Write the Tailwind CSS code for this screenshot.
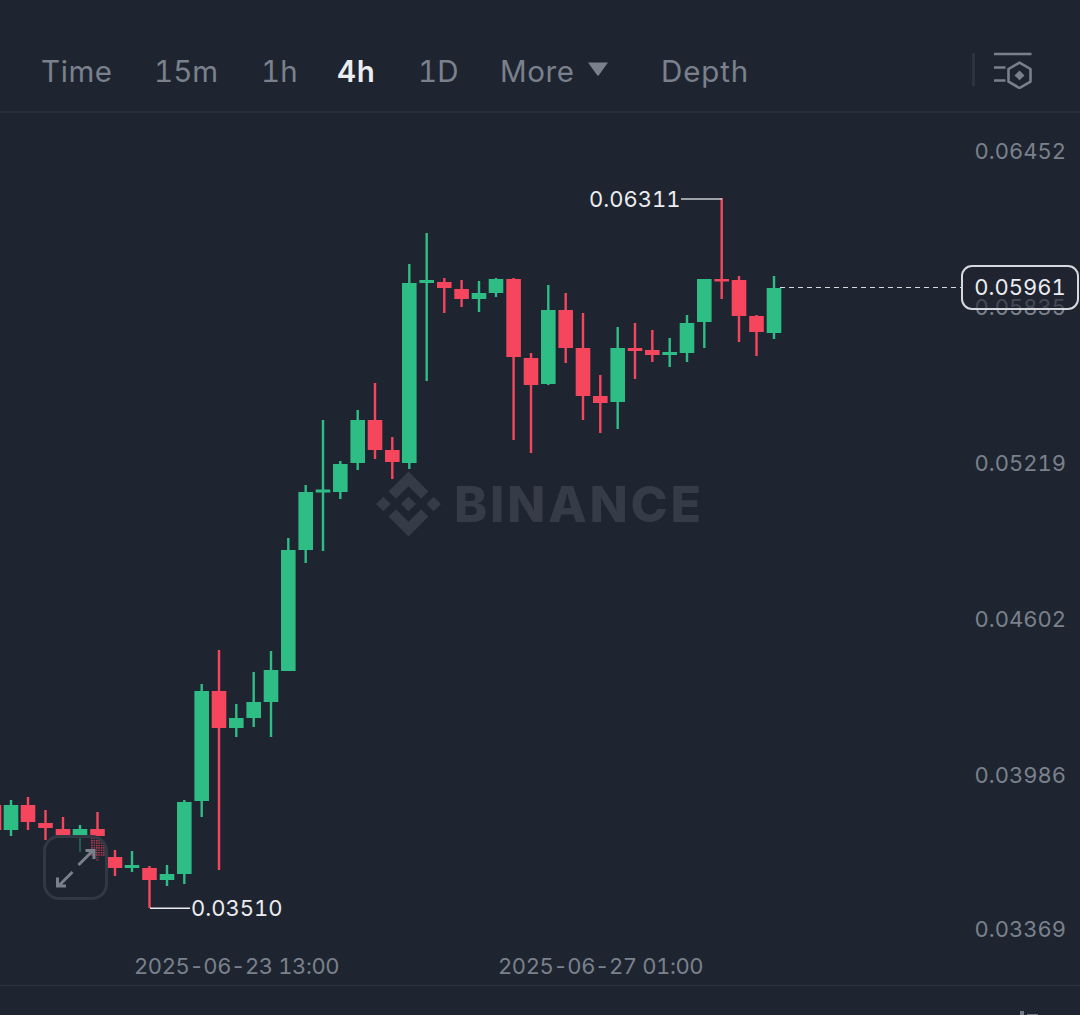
<!DOCTYPE html>
<html lang="en">
  <head>
    <meta charset="UTF-8" />
    <title>Chart</title>
    <script src="https://cdn.jsdelivr.net/npm/@tailwindcss/browser@4"></script>
  </head>
  <body class="bg-[#1f2530] font-['Inter',sans-serif] overflow-hidden">
    <div class="w-[1080px] h-[1015px] flex flex-col relative">
      <!-- tabs -->
      <div class="h-[113px] shrink-0 border-b-2 border-[#272d38] flex items-center pl-[41px] pt-[31px] text-[29.5px] tracking-[0.6px] tabular-nums text-[#7a818c]">
        <span class="w-[114px]">Time</span>
        <span class="w-[107px] -ml-[1px] mr-[1px] tracking-[0px]">15m</span>
        <span class="w-[75px] -ml-[1px] mr-[1px] tracking-[0px]">1h</span>
        <span class="w-[82px] text-[#eaecef] font-semibold">4h</span>
        <span class="w-[81px] -ml-[1px] mr-[1px] tracking-[0px]">1D</span>
        <span class="w-[88px]">More</span>
        <svg class="w-[20px] h-[14px] mr-[53px] -mt-[5px]" viewBox="0 0 20 14"><path d="M0 0.5H20L11 13a1.2 1.2 0 0 1-2 0Z" fill="#7a818c" /></svg>
        <span class="w-[311px] tracking-[0.9px]">Depth</span>
        <div class="w-[2.5px] h-[33px] bg-[#2e343f] mr-[19px] -mt-[3px]"></div>
        <svg class="w-[40px] h-[38px] -mt-[2px] -ml-[1px]" viewBox="0 0 40 38" fill="none" stroke="#7a818c" stroke-width="2.6">
          <path d="M1 3H38.5M1 16.5H12.5M1 29.5H12.5" />
          <path d="M26.5 11.6L37.5 18V30.6L26.5 37L15.5 30.6V18Z" stroke-linejoin="round" />
          <path d="M26.5 19.5L31.5 24.4L26.5 29.3L21.5 24.4Z" fill="#7a818c" stroke="none" />
        </svg>
      </div>

      <!-- chart -->
      <div class="relative flex-1">
        <!-- watermark -->
        <div class="absolute left-[376px] top-[358px] flex items-center gap-[13px] text-[#363c47]">
          <svg class="w-[65px] h-[66px]" viewBox="0 0 126.61 126.61" fill="#363c47">
            <path d="M38.73 53.2l24.59-24.58 24.6 24.6 14.3-14.31L63.32 0 24.43 38.89zM0 63.31l14.3-14.31 14.31 14.31-14.31 14.3zM38.73 73.41l24.59 24.59 24.6-24.6 14.31 14.29-38.9 38.91-38.91-38.88-.02-.02zM98.03 63.31l14.3-14.31 14.31 14.31-14.31 14.3z" />
            <path d="M77.83 63.3L63.32 48.78 52.59 59.51l-1.24 1.23-2.54 2.54 14.51 14.5 14.51-14.47z" />
          </svg>
          <span class="text-[50px] font-extrabold leading-none tracking-[2.8px]">BINANCE</span>
        </div>

        <svg id="candles" class="absolute inset-0 w-[1080px] h-[870px]" viewBox="0 113 1080 870"></svg>

        <!-- price axis -->
        <div class="absolute right-[14px] top-[24px] flex flex-col gap-[128px] text-[22px] leading-[28px] tabular-nums text-[#7a818c]">
          <span>0.06452</span>
          <span>0.05835</span>
          <span>0.05219</span>
          <span>0.04602</span>
          <span>0.03986</span>
          <span class="-mt-[2px]">0.03369</span>
        </div>

        <!-- last price -->
        <div class="absolute left-[961px] top-[152px] w-[118px] h-[45px] rounded-[11px] border-2 border-[#d5d8dc] bg-[#1f2530]/60 flex items-center justify-center text-[22px] tabular-nums text-[#eaecef]">0.05961</div>

        <!-- high / low -->
        <span class="absolute left-[589px] top-[72px] text-[22px] leading-[28px] tabular-nums text-[#eaecef]">0.06311</span>
        <span class="absolute left-[191px] top-[781px] text-[22px] leading-[28px] tabular-nums text-[#eaecef]">0.03510</span>

        <!-- dates -->
        <span class="absolute left-[134px] top-[839px] text-[22px] leading-[28px] tabular-nums tracking-[-0.4px] text-[#7a818c]">2025-06-23 13:00</span>
        <span class="absolute left-[498px] top-[839px] text-[22px] leading-[28px] tabular-nums tracking-[-0.4px] text-[#7a818c]">2025-06-27 01:00</span>

        <!-- expand button -->
        <div class="absolute left-[43px] top-[722px] w-[65px] h-[65px] rounded-[16px] border-[3px] border-[#333944] bg-[#1f2530] overflow-hidden">
          <svg class="absolute -left-[3px] -top-[3px] w-[65px] h-[65px]" viewBox="43 835 65 65" fill="none">
            <defs>
              <pattern id="dots" width="2.4" height="2.4" patternUnits="userSpaceOnUse">
                <rect width="1.4" height="1.4" fill="#f6465d" />
              </pattern>
            </defs>
            <rect x="91" y="836" width="14" height="20" fill="url(#dots)" opacity="0.75" />
            <rect x="96.5" y="856" width="2" height="5" fill="url(#dots)" opacity="0.75" />
            <rect x="79" y="836" width="2" height="16" fill="#2ebd85" opacity="0.35" />
            <path d="M78.5 865L92 851.5M85.5 850.5H94V859M72.5 872L59 885.5M57.5 877.5V886H66" stroke="#7a818c" stroke-width="3" />
          </svg>
        </div>
      </div>

      <!-- bottom bar -->
      <div class="h-[30px] shrink-0 border-t border-[#2f353f] relative">
        <div class="absolute left-[1020px] top-[25px] w-[4px] h-[4px] bg-[#737a86]"></div>
        <div class="absolute left-[1027px] top-[28px] w-[11px] h-[1px] bg-[#737a86]"></div>
      </div>
    </div>

    <script>
      // x, wick top, wick bottom, body top, body bottom, up?
      const candles = [
        [-6, 797, 838, 805, 830, 0],
        [11, 800, 836, 805, 830, 1],
        [28, 797, 830, 805, 822, 0],
        [45.5, 810, 840, 823, 828, 0],
        [63, 817, 840, 829, 835, 0],
        [80, 825, 835, 829, 835, 1],
        [97.5, 812, 836, 829, 836, 0],
        [115, 850, 876, 857, 868, 0],
        [132, 851, 872, 865, 868, 1],
        [149.5, 866, 908, 868, 880, 0],
        [167, 865, 886, 874, 880, 1],
        [184.3, 800, 884, 802, 874, 1],
        [201.7, 684, 817, 691, 801, 1],
        [219, 650, 870, 691, 728, 0],
        [236.3, 704, 737, 718, 728, 1],
        [253.7, 672, 727, 702, 718, 1],
        [271, 651, 737, 670, 702, 1],
        [288.3, 538, 671, 550, 671, 1],
        [305.7, 485, 563, 492, 550, 1],
        [323, 420, 551, 489.5, 492.5, 1],
        [340.3, 461, 499, 464, 492, 1],
        [357.7, 410, 470, 420, 463, 1],
        [375, 383, 459, 420, 450, 0],
        [392.3, 437, 479, 450, 462, 0],
        [409.3, 264, 469, 283, 463, 1],
        [426.7, 233, 381, 280, 283, 1],
        [444.3, 278, 313, 282, 288, 0],
        [461.6, 280, 307, 289, 299, 0],
        [479, 281, 312, 293, 299, 1],
        [496, 278, 297, 279, 293, 1],
        [513.6, 278, 440, 279, 357, 0],
        [531, 353, 453, 358, 385, 0],
        [548.3, 285, 385, 310, 384, 1],
        [565.7, 293, 363, 310, 348, 0],
        [583, 313, 420, 348, 396, 0],
        [600.3, 375, 433, 396, 403, 0],
        [617.7, 327, 429, 348, 402, 1],
        [635, 323, 379, 348, 351, 0],
        [652.3, 330, 362, 350, 355, 0],
        [669.7, 338, 367, 352, 355, 1],
        [687, 315, 362, 323, 353, 1],
        [704.3, 279, 348, 279, 322, 1],
        [721.7, 198, 299, 279, 281.5, 0],
        [739, 276, 342, 280, 316, 0],
        [756.5, 315, 356, 316, 332, 0],
        [774, 276, 339, 288, 333, 1],
      ];
      const svg = document.getElementById("candles");
      const NS = "http://www.w3.org/2000/svg";

      function add(tag, attrs) {
        const el = document.createElementNS(NS, tag);
        Object.keys(attrs).forEach((k) => el.setAttribute(k, attrs[k]));
        svg.appendChild(el);
      }

      candles.forEach(([x, wt, wb, bt, bb, up]) => {
        const fill = up ? "#2ebd85" : "#f6465d";
        add("rect", { x: x - 1.2, y: wt, width: 2.4, height: wb - wt, fill });
        add("rect", { x: x - 7.3, y: bt, width: 14.6, height: bb - bt, fill });
      });

      // high, low, last price lines
      add("path", { d: "M681 199H722", stroke: "#c9ccd1", "stroke-width": 1.5, fill: "none" });
      add("path", { d: "M150 908.3H190", stroke: "#eaecef", "stroke-width": 1.5, fill: "none" });
      add("path", { d: "M780 287.5H961", stroke: "#d5d8dc", "stroke-width": 1.2, "stroke-dasharray": "5 4", fill: "none" });
    </script>
  </body>
</html>
